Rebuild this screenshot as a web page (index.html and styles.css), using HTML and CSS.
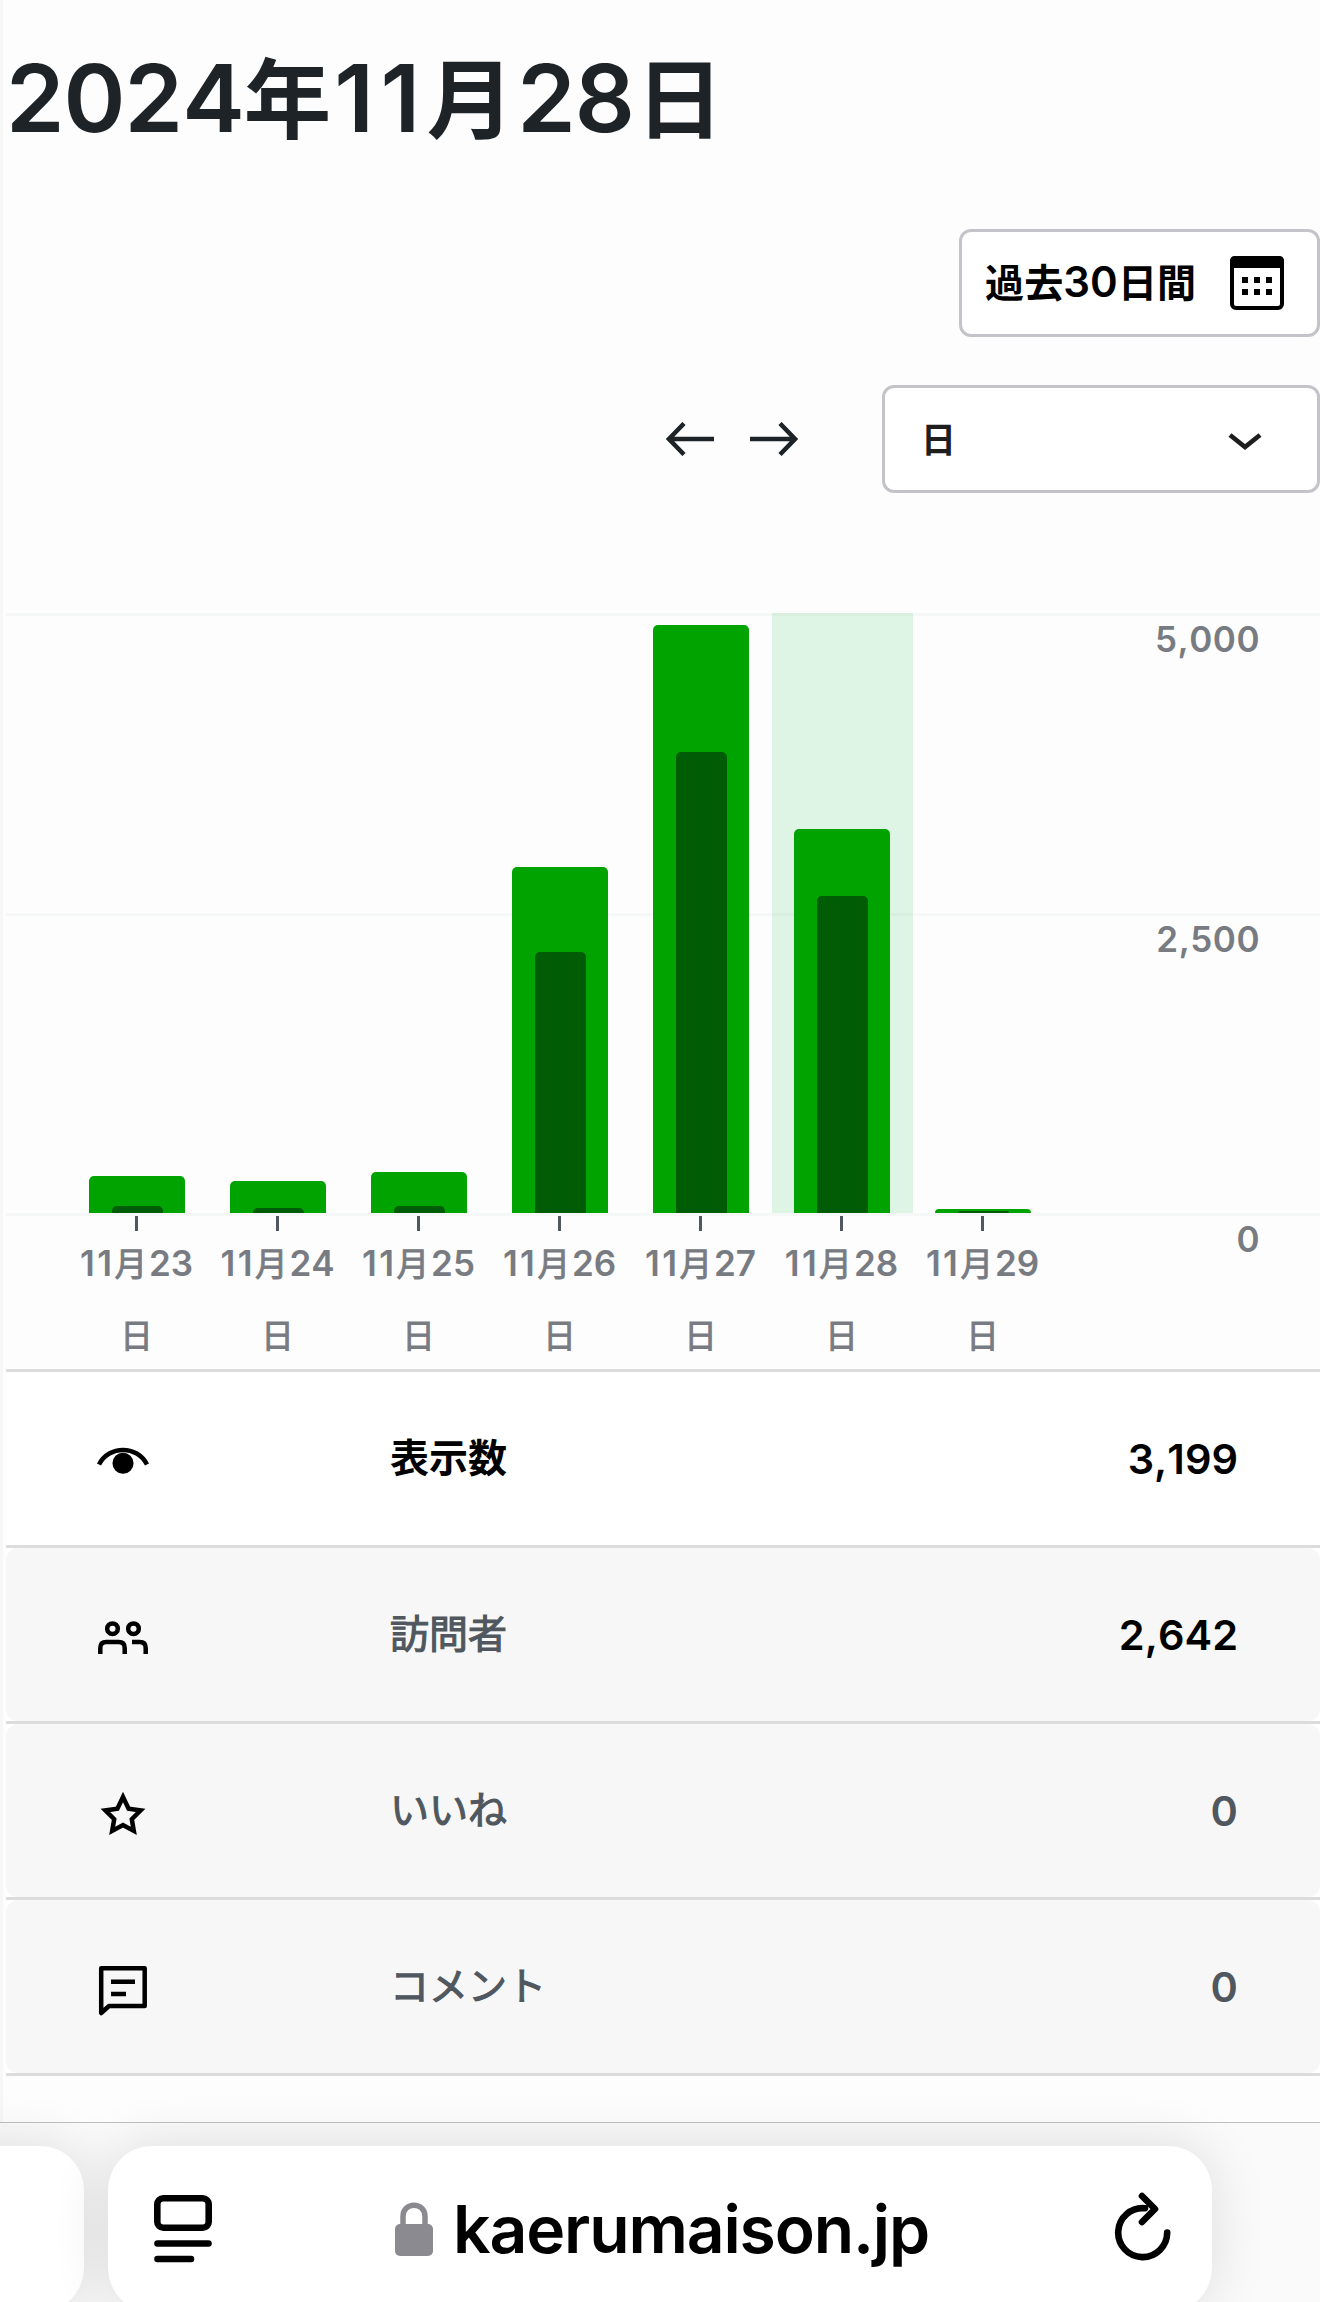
FILE: index.html
```html
<!DOCTYPE html>
<html lang="ja">
<head>
    <meta charset="utf-8">
    <title>2024年11月28日</title>
    <link rel="stylesheet" href="styles.css">
</head>
<body>
    <main class="stats">
        <h1>2024<i>年</i><b>11</b><i>月</i>28<i>日</i></h1>

        <div class="toolbar">
            <button class="control range">
                <span><i>過去</i>30<i>日間</i></span>
                <svg class="calendar" viewBox="0 0 54 54">
                    <rect x="2" y="2" width="50" height="50" rx="4" fill="none" stroke="#000" stroke-width="4"/>
                    <path d="M0 12V5q0-5 5-5h44q5 0 5 5v7z"/>
                    <path d="M12 21h6v6h-6zM24 21h6v6h-6zM36 21h6v6h-6zM12 33h6v6h-6zM24 33h6v6h-6zM36 33h6v6h-6z"/>
                </svg>
            </button>
        </div>

        <div class="toolbar period">
            <div class="arrows">
                <svg viewBox="0 0 48 34"><path d="M48 17H3M18 1.5L3 17L18 32.5"/></svg>
                <svg viewBox="0 0 48 34"><path d="M0 17H45M30 1.5L45 17L30 32.5"/></svg>
            </div>
            <button class="control select">
                <span>日</span>
                <svg class="chevron" viewBox="0 0 34 20"><path d="M2 2L17 14L32 2"/></svg>
            </button>
        </div>

        <section class="chart">
            <div class="plot">
                <div class="bars">
                    <div class="day"><div class="bar" style="height: 37.5px"><div class="visitors" style="height: 7.5px"></div></div></div>
                    <div class="day"><div class="bar" style="height: 31.7px"><div class="visitors" style="height: 5.5px"></div></div></div>
                    <div class="day"><div class="bar" style="height: 41px"><div class="visitors" style="height: 6.7px"></div></div></div>
                    <div class="day"><div class="bar" style="height: 346px"><div class="visitors" style="height: 261px"></div></div></div>
                    <div class="day"><div class="bar" style="height: 587.7px"><div class="visitors" style="height: 461px"></div></div></div>
                    <div class="day selected"><div class="bar" style="height: 384px"><div class="visitors" style="height: 317.4px"></div></div></div>
                    <div class="day"><div class="bar" style="height: 4px"><div class="visitors" style="height: 2px"></div></div></div>
                </div>
                <div class="scale">
                    <span>5,000</span>
                    <span>2,500</span>
                    <span>0</span>
                </div>
            </div>
            <div class="dates">
                <span><b>11</b><i>月</i>23<br><i>日</i></span>
                <span><b>11</b><i>月</i>24<br><i>日</i></span>
                <span><b>11</b><i>月</i>25<br><i>日</i></span>
                <span><b>11</b><i>月</i>26<br><i>日</i></span>
                <span><b>11</b><i>月</i>27<br><i>日</i></span>
                <span><b>11</b><i>月</i>28<br><i>日</i></span>
                <span><b>11</b><i>月</i>29<br><i>日</i></span>
            </div>
        </section>

        <ul class="tabs">
            <li class="active">
                <svg viewBox="0 0 72 72"><path d="M12 40.5C22 21 50 21 60 40.5"/><circle cx="36" cy="39.3" r="8.3" fill="#000"/></svg>
                <span class="label">表示数</span>
                <span class="value">3,199</span>
            </li>
            <li class="filled">
                <svg viewBox="0 0 72 72">
                    <circle cx="25.5" cy="28.7" r="5.3"/>
                    <circle cx="46.5" cy="28.7" r="5.3"/>
                    <path d="M13.3 54V48Q13.3 42 19.3 42H31.7Q37.7 42 37.7 48V54M45 42H52.7Q58.7 42 58.7 48V54"/>
                </svg>
                <span class="label">訪問者</span>
                <span class="value">2,642</span>
            </li>
            <li>
                <svg viewBox="0 0 72 72"><path d="M36 21l5.6 11.8 12 1.6-8.8 8.8 2 11.7L36 49l-10.800 5.900 2-11.700-8.800-8.800 12-1.600z"/></svg>
                <span class="label">いいね</span>
                <span class="value">0</span>
            </li>
            <li>
                <svg viewBox="0 0 72 72"><path d="M14.2 16.300H57.700V54H22L14.200 61zM24 29.700H48M24 42H39" stroke-linejoin="round"/></svg>
                <span class="label">コメント</span>
                <span class="value">0</span>
            </li>
        </ul>
    </main>

    <footer class="browser">
        <div class="tab previous"></div>
        <div class="tab address">
            <svg class="reader" viewBox="0 0 58 68"><rect x="3.3" y="3.3" width="51.4" height="29.4" rx="6"/><path d="M3.5 48.5H54.5M3.5 64H37"/></svg>
            <div class="host">
                <svg class="lock" viewBox="0 0 38 54"><rect y="22" width="38" height="32" rx="5"/><path d="M8 24V14.5C8 -.5 30 -.5 30 14.5V24" fill="none" stroke="#8b8a91" stroke-width="5.5"/></svg>
                <span>kaerumaison.jp</span>
            </div>
            <svg class="reload" viewBox="0 0 58 70"><path d="M31 16.2A24.5 24.5 0 1 0 53.2 40.5M28 4L41 17L28 30"/></svg>
        </div>
    </footer>
</body>
</html>
```

FILE: styles.css
```css
* {
    box-sizing: border-box;
}
body {
    margin: 0;
    width: 1320px;
    height: 2302px;
    overflow: hidden;
    background-color: #fdfdfd;
    color: #000000;
    font-family: Inter, "Noto Sans CJK JP", sans-serif;
    font-kerning: none;
}
/* kanji run slightly smaller than the digits */
i {
    font-size: 0.93em;
    font-style: normal;
    line-height: 1;
}
/* the narrow ones get some air */
b {
    font-weight: inherit;
    letter-spacing: 0.07em;
}
.stats {
    height: 2122px;
    padding-left: 3px;
    border-left: 3px solid #f7f7f7;
}
h1 {
    margin: 0;
    height: 229px;
    padding: 41px 0 0 0;
    color: #1d2327;
    font-size: 94px;
    line-height: 114px;
    font-weight: 600;
    letter-spacing: -1px;
    white-space: nowrap;
}
h1 i {
    margin-right: 4px;
}
h1 i:last-child {
    margin-left: 2px;
}
.toolbar {
    display: flex;
    justify-content: flex-end;
    height: 108px;
}
.control {
    display: flex;
    align-items: center;
    justify-content: space-between;
    height: 108px;
    border: 3px solid #c3c3c9;
    border-radius: 12px;
    background-color: #ffffff;
    color: #000000;
    font-family: inherit;
    font-size: 42px;
    font-weight: 600;
}
.control span {
    margin-top: -4px;
}
.range {
    width: 361px;
    padding: 0 33px 0 23px;
}
.range span {
    letter-spacing: 0.1px;
}
.calendar {
    width: 54px;
    height: 54px;
}
.period {
    margin-top: 48px;
}
.arrows {
    display: flex;
    align-items: center;
    gap: 36px;
    margin-right: 84px;
}
.arrows svg {
    width: 48px;
    height: 34px;
    fill: none;
    stroke: #1d2327;
    stroke-width: 4.5;
}
.select {
    width: 438px;
    padding: 0 55px 0 36px;
    color: #1e1e1e;
    font-size: 35px;
}
.chevron {
    width: 34px;
    height: 20px;
    margin-top: 8px;
    fill: none;
    stroke: #1e1e1e;
    stroke-width: 4.8;
}
.chart {
    height: 756px;
    margin-top: 120px;
    color: #787c82;
    font-size: 35px;
    font-weight: 600;
}
.plot {
    display: flex;
    justify-content: space-between;
    height: 603px;
    padding: 0 60px 0 61px;
    background: repeating-linear-gradient(#f6f7f7 0 3px, transparent 3px 300px);
}
.bars {
    display: flex;
    height: 600px;
}
.day {
    display: flex;
    align-items: flex-end;
    width: 141px;
    padding-left: 22px;
}
.selected {
    background-color: rgba(0, 180, 60, 0.12);
}
.bar {
    display: flex;
    align-items: flex-end;
    width: 96px;
    padding-left: 22.5px;
    border-radius: 5px 5px 0 0;
    background-color: #00a300;
}
.visitors {
    width: 51px;
    border-radius: 5px 5px 0 0;
    background-color: #005c05;
}
.scale {
    text-align: right;
    letter-spacing: 0.5px;
}
.scale span {
    display: block;
    height: 300px;
    padding-top: 4px;
    line-height: 44px;
}
.dates {
    display: flex;
    padding-left: 60px;
}
.dates span {
    width: 141px;
    text-align: center;
    line-height: 72px;
}
.dates span::before {
    content: "";
    display: block;
    width: 3px;
    height: 15px;
    margin: 0 auto -4px;
    background-color: #50575e;
}
.dates i {
    font-weight: 400;
    -webkit-text-stroke: 0.9px #787c82;
}
.dates b + i {
    margin-right: 2px;
}
.tabs {
    margin: 0;
    padding: 0;
    list-style: none;
    border-top: 3px solid #dcdcdc;
}
.tabs li {
    display: flex;
    align-items: center;
    height: 176px;
    padding: 0 82px 0 81px;
    border-bottom: 3px solid #dcdcdc;
    background: #ffffff;
    color: #50575e;
    font-size: 39px;
    font-weight: 400;
    position: relative;
    z-index: 0;
}
.tabs li:not(.active)::before {
    content: "";
    position: absolute;
    inset: 0;
    z-index: -1;
    border-radius: 12px;
    background-color: #f7f7f7;
}
.tabs svg {
    width: 72px;
    height: 72px;
    margin-top: 3px;
    fill: none;
    stroke: #000000;
    stroke-width: 4.5;
}
.label {
    flex: 1;
    margin: -7px 0 0 231px;
    -webkit-text-stroke: 1.1px #50575e;
}
.value {
    font-size: 41.5px;
    font-weight: 600;
}
.tabs .active {
    color: #000000;
    font-weight: 600;
}
.active .label {
    -webkit-text-stroke: 0;
}
.filled .value {
    color: #000000;
}
.browser {
    display: flex;
    gap: 24px;
    height: 180px;
    padding-top: 23px;
    border-top: 1px solid #bfbfc2;
    background-color: #fafafa;
}
.tab {
    flex: none;
    height: 166px;
    border-radius: 44px;
    background-color: #ffffff;
    box-shadow: 0 0 56px rgba(0, 0, 0, 0.12);
}
.previous {
    width: 184px;
    margin-left: -100px;
}
.address {
    display: flex;
    align-items: center;
    justify-content: space-between;
    width: 1104px;
    padding: 0 40px 0 46px;
}
.reader {
    width: 58px;
    height: 68px;
    fill: none;
    stroke: #000000;
    stroke-width: 6.6;
    stroke-linecap: round;
}
.host {
    display: flex;
    align-items: center;
    gap: 20px;
    margin-right: 2px;
    font-size: 66px;
    font-weight: 600;
    letter-spacing: -1.15px;
}
.lock {
    width: 38px;
    height: 54px;
    fill: #8b8a91;
}
.reload {
    width: 58px;
    height: 70px;
    margin-top: -4px;
    fill: none;
    stroke: #000000;
    stroke-width: 6.6;
    stroke-linecap: round;
    stroke-linejoin: round;
}
```
